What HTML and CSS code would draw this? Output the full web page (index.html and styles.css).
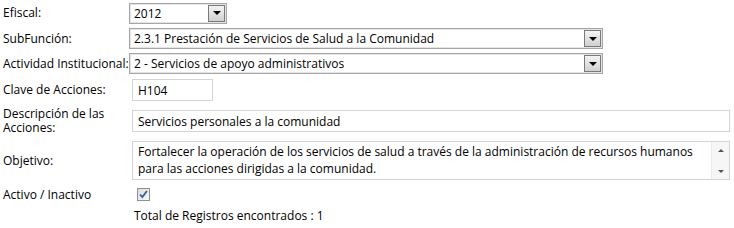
FILE: index.html
```html
<!DOCTYPE html>
<html lang="es">
<head>
<meta charset="utf-8">
<link rel="stylesheet" href="styles.css">
</head>
<body>
<div class="form">
  <div class="row r-efiscal">
    <div class="label">Efiscal:</div>
    <div class="field">
      <div class="select sel-small"><span class="sel-text">2012</span><span class="sel-btn"><span class="tri"></span></span></div>
    </div>
  </div>
  <div class="row r-sub">
    <div class="label">SubFunción:</div>
    <div class="field">
      <div class="select sel-wide"><span class="sel-text">2.3.1 Prestación de Servicios de Salud a la Comunidad</span><span class="sel-btn"><span class="tri"></span></span></div>
    </div>
  </div>
  <div class="row r-act">
    <div class="label">Actividad Institucional:</div>
    <div class="field">
      <div class="select sel-wide"><span class="sel-text">2 - Servicios de apoyo administrativos</span><span class="sel-btn"><span class="tri"></span></span></div>
    </div>
  </div>
  <div class="row r-clave">
    <div class="label">Clave de Acciones:</div>
    <div class="field">
      <div class="input inp-small">H104</div>
    </div>
  </div>
  <div class="row r-desc">
    <div class="label">Descripción de las Acciones:</div>
    <div class="field">
      <div class="input inp-wide">Servicios personales a la comunidad</div>
    </div>
  </div>
  <div class="row r-obj">
    <div class="label">Objetivo:</div>
    <div class="field">
      <div class="textarea">
        <div class="ta-text">Fortalecer la operación de los servicios de salud a través de la administración de recursos humanos para las acciones dirigidas a la comunidad.</div>
        <div class="ta-scroll"><span class="arr-up"></span><span class="arr-down"></span></div>
      </div>
    </div>
  </div>
  <div class="row r-activo">
    <div class="label">Activo / Inactivo</div>
    <div class="field">
      <span class="checkbox"><svg width="11" height="11" viewBox="0 0 11 11"><path d="M2 5.5 L4.3 8 L9 2" fill="none" stroke="#3c5a9a" stroke-width="1.8"/></svg></span>
    </div>
  </div>
  <div class="row r-total">
    <div class="label"></div>
    <div class="field total">Total de Registros encontrados : 1</div>
  </div>
</div>
</body>
</html>
```
FILE: styles.css
```css
html, body {
  margin: 0;
  padding: 0;
  background: #fff;
}
body {
  font-family: "Open Sans", "Noto Sans", sans-serif;
  font-size: 12px;
  color: #000;
}
.form {
  padding: 0 0 0 3px;
}
.row {
  display: flex;
  align-items: center;
}
.label {
  width: 126px;
  flex: none;
  line-height: 14px;
}
.field {
  flex: 1;
  display: flex;
  align-items: center;
}
.r-efiscal { height: 26px; }
.r-sub { height: 25px; }
.r-act { height: 25px; }
.r-clave { height: 28px; }
.r-desc { height: 34px; }
.r-obj { height: 45px; }
.r-activo { height: 23px; }
.r-total { height: 19px; }

.select {
  box-sizing: border-box;
  height: 21px;
  border: 1px solid #a6a6a6;
  box-shadow: inset 0 0 0 1px #e4e4e4;
  display: flex;
  align-items: center;
  justify-content: space-between;
  background: #fff;
}
.sel-small { width: 98px; }
.sel-wide { width: 474px; }
.sel-text {
  padding-left: 4px;
  white-space: nowrap;
}
.sel-btn {
  box-sizing: border-box;
  width: 17px;
  height: 17px;
  margin-right: 1px;
  border: 1px solid #7a7a7a;
  background: linear-gradient(#f4f4f4, #d0d0d0);
  display: flex;
  align-items: center;
  justify-content: center;
}
.tri {
  width: 0;
  height: 0;
  border-left: 4px solid transparent;
  border-right: 4px solid transparent;
  border-top: 4px solid #000;
}
.input {
  box-sizing: border-box;
  height: 22px;
  border: 1px solid #d4d4d4;
  padding: 2px 0 0 5px;
  line-height: 17px;
  margin-left: 3px;
}
.inp-small { width: 81px; }
.inp-wide { width: 598px; }
.textarea {
  box-sizing: border-box;
  margin-left: 3px;
  width: 598px;
  height: 39px;
  border: 1px solid #d4d4d4;
  display: flex;
}
.ta-text {
  flex: 1;
  padding: 1px 0 0 5px;
  line-height: 17px;
}
.ta-scroll {
  width: 17px;
  background: #f6f6f6;
  border-left: 1px solid #ececec;
  display: flex;
  flex-direction: column;
  justify-content: space-between;
  align-items: center;
  padding: 7px 0 6px;
}
.arr-up {
  width: 0; height: 0;
  border-left: 3px solid transparent;
  border-right: 3px solid transparent;
  border-bottom: 3px solid #555;
}
.arr-down {
  width: 0; height: 0;
  border-left: 3px solid transparent;
  border-right: 3px solid transparent;
  border-top: 3px solid #555;
}
.checkbox {
  box-sizing: border-box;
  width: 13px;
  height: 13px;
  margin-left: 8px;
  border: 1px solid #8f8f8f;
  background: linear-gradient(135deg, #dcdcdc, #f8f8f8);
  display: flex;
  align-items: center;
  justify-content: center;
}
.total {
  padding-left: 5px;
}
```
